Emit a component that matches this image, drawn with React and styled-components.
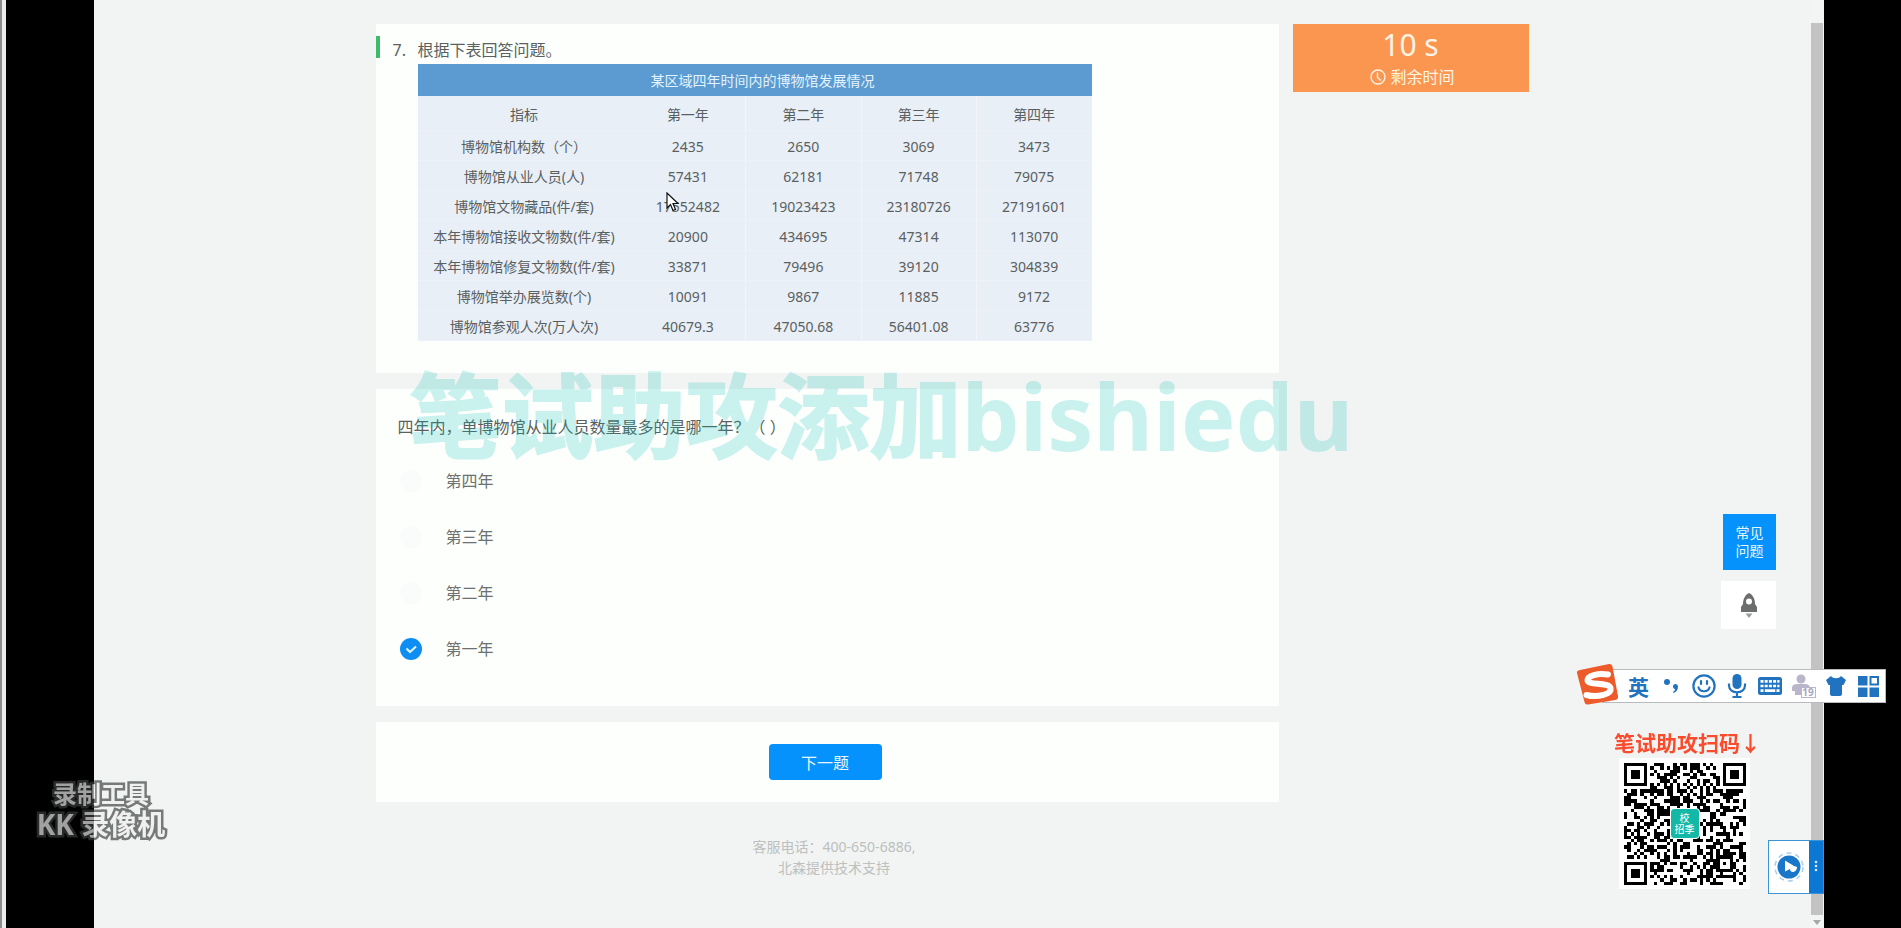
import React, { useState } from "react";
import styled, { createGlobalStyle } from "styled-components";

const GlobalStyle = createGlobalStyle`
  * { box-sizing: border-box; }
  body {
    margin: 0;
    background: #000;
    color: #5a5f5f;
    font-family: "Noto Sans", "Noto Sans CJK SC", sans-serif;
    font-size: 16px;
    line-height: 24px;
  }
  button { font-family: inherit; border: 0; padding: 0; cursor: pointer; }
`;

const Desktop = styled.div`
  position: relative;
  display: flex;
  min-height: 100vh;
  overflow: hidden;
`;

const WindowEdge = styled.div`
  flex: 0 0 6px;
  background: #ececec;
  border-left: 2px solid #8c8c8c;
`;

const BlackBar = styled.div`
  flex: 0 0 ${(p) => p.$width}px;
  background: #000;
`;

const Page = styled.div`
  flex: 1;
  display: flex;
  justify-content: center;
  gap: 14px;
  padding-top: 24px;
  background: #f1f4f3;
`;

const Column = styled.main`
  position: relative;
  flex: 0 1 903px;
  display: flex;
  flex-direction: column;
  gap: 16px;
`;

const Sidebar = styled.aside`
  flex: 0 0 236px;
`;

const Card = styled.section`
  background: #fdfffd;
`;

const MaterialCard = styled(Card)`
  padding: 12px 0 32px;
`;

const MaterialTitle = styled.h1`
  display: flex;
  gap: 10px;
  margin: 0;
  padding-left: 13px;
  border-left: 4px solid #3dbd6b;
  height: 22px;
  font-size: 16px;
  font-weight: 400;
  line-height: 28px;
`;

const Number = styled.span`
  width: 15px;
`;

const DataTable = styled.table`
  width: 674px;
  margin: 6px 0 0 42px;
  border-collapse: collapse;
  table-layout: fixed;
  background: #e9eff7;
  font-size: 14px;
  line-height: 20px;
  text-align: center;

  caption {
    height: 32px;
    padding-left: 16px;
    line-height: 34px;
    background: #5b9bd1;
    color: #e3f3fc;
  }
  th, td {
    height: 30px;
    padding: 4px 0 0;
    font-weight: 400;
    border-bottom: 1px solid #edf2f9;
  }
  thead th { height: 34px; }
  th:first-child { width: 213px; }
  td:nth-child(n + 3), thead th:nth-child(n + 3) { border-left: 1px solid #f2f6fb; }
`;

const QuestionCard = styled(Card)`
  padding: 26px 22px 29px;
`;

const Options = styled.fieldset`
  margin: 0;
  padding: 0;
  border: 0;
`;

const Stem = styled.legend`
  padding: 0;
  margin-bottom: 14px;
`;

const Option = styled.label`
  display: flex;
  align-items: center;
  gap: 24px;
  height: 56px;
  padding-left: 2px;
  color: #6c7171;
  cursor: pointer;
`;

const RadioBox = styled.span`
  display: grid;
  width: 22px;
  height: 22px;

  > * { grid-area: 1 / 1; }
  svg { visibility: hidden; pointer-events: none; }
  input:checked + svg { visibility: visible; }
`;

const Radio = styled.input`
  appearance: none;
  width: 22px;
  height: 22px;
  margin: 0;
  border-radius: 50%;
  background: #fafcfb;
  &:checked { background: #0e8ef2; }
`;

const ActionCard = styled(Card)`
  display: flex;
  justify-content: center;
  padding: 22px 4px 22px 0;
`;

const NextButton = styled.button`
  width: 113px;
  height: 36px;
  border-radius: 4px;
  background: #0592fd;
  color: #e6f7ff;
  font-size: 16px;
`;

const Footer = styled.footer`
  padding: 18px 0 0 14px;
  color: #bcc0bf;
  font-size: 14px;
  line-height: 21px;
  text-align: center;

  p { margin: 0; }
`;

const Timer = styled.div`
  display: flex;
  flex-direction: column;
  align-items: center;
  height: 68px;
  background: #fb9650;
  color: #fff4e6;
`;

const TimeLeft = styled.strong`
  font-size: 30px;
  font-weight: 400;
  line-height: 42px;
`;

const TimeLabel = styled.span`
  display: flex;
  align-items: center;
  gap: 4px;
  padding-left: 4px;
  line-height: 22px;
`;

const Scrollbar = styled.div`
  flex: 0 0 14px;
  display: flex;
  flex-direction: column;
  align-items: center;
  padding: 23px 1px 2px 0;
  background: #f3f5f4;
`;

const Thumb = styled.div`
  flex: 1;
  width: 12px;
  margin-bottom: 3px;
  background: #c2c3c2;
`;

const Watermark = styled.div`
  position: absolute;
  left: 34px;
  top: 346px;
  color: rgb(0, 190, 182);
  font-size: 92px;
  font-weight: 700;
  line-height: 92px;
  white-space: nowrap;
  opacity: 0.2;
  pointer-events: none;
`;

const HeavyText = styled.span`
  -webkit-text-stroke: 2px currentColor;
`;

const SideTools = styled.nav`
  position: fixed;
  right: 125px;
  top: 514px;
  display: flex;
  flex-direction: column;
  align-items: flex-end;
  gap: 11px;
`;

const FaqButton = styled.button`
  width: 53px;
  height: 56px;
  padding: 0 12px;
  background: #0592fd;
  color: #e6f7ff;
  font-size: 14px;
  line-height: 18px;
`;

const RocketButton = styled.button`
  display: grid;
  place-items: center;
  width: 55px;
  height: 48px;
  background: #fff;
`;

const ImeBar = styled.div`
  position: fixed;
  right: 15px;
  top: 669px;
  display: flex;
  align-items: center;
  width: 284px;
  height: 34px;
  padding-left: 19px;
  border: 1px solid #b9bcbf;
  background: #fff;
  color: #2273bf;
`;

const ImeLogo = styled.svg`
  position: absolute;
  left: -27px;
  top: -7px;
`;

const ImeButton = styled.button`
  display: grid;
  place-items: center;
  width: 33px;
  height: 32px;
  background: none;
  color: inherit;
  font-size: 21px;
  font-weight: 700;
`;

const ScanPanel = styled.div`
  position: fixed;
  right: 140px;
  top: 728px;
  display: flex;
  flex-direction: column;
  align-items: center;
`;

const ScanTitle = styled.div`
  height: 30px;
  color: #fb4b2d;
  font-size: 21px;
  font-weight: 700;
  line-height: 30px;
  white-space: nowrap;
`;

const QrFrame = styled.div`
  display: grid;
  place-items: center;
  width: 131px;
  height: 131px;
  margin-right: 6px;
  background: #fff;

  > * { grid-area: 1 / 1; }
`;

const QrBadge = styled.div`
  display: grid;
  place-content: center;
  width: 30px;
  height: 31px;
  border: 1px solid #fff;
  border-radius: 4px;
  background: #14b8a6;
  color: #fff;
  font-size: 10px;
  line-height: 11px;
  text-align: center;
`;

const Recorder = styled.div`
  position: fixed;
  right: 77px;
  top: 840px;
  display: flex;
  width: 56px;
  height: 54px;
  border: 1px solid #3b93d8;
  background: #fff;
`;

const RecordButton = styled.button`
  flex: 1;
  display: grid;
  place-items: center;
  background: #fff;
`;

const MoreButton = styled.button`
  width: 14px;
  background: #0d78d4;
`;

const RecorderMark = styled.div`
  position: fixed;
  left: 34px;
  top: 778px;
  width: 134px;
  color: #ededed;
  font-weight: 700;
  text-align: center;
  white-space: nowrap;
  opacity: 0.68;
  -webkit-text-stroke: 5px #3a3f3d;
  paint-order: stroke fill;
  pointer-events: none;
`;

const MarkLine = styled.div`
  font-size: ${(p) => p.$size}px;
  line-height: 31px;
`;

const Cursor = styled.svg`
  position: absolute;
  left: 290px;
  top: 168px;
`;

const years = ["第一年", "第二年", "第三年", "第四年"];

const rows = [
  ["博物馆机构数（个）", "2435", "2650", "3069", "3473"],
  ["博物馆从业人员(人)", "57431", "62181", "71748", "79075"],
  ["博物馆文物藏品(件/套)", "17552482", "19023423", "23180726", "27191601"],
  ["本年博物馆接收文物数(件/套)", "20900", "434695", "47314", "113070"],
  ["本年博物馆修复文物数(件/套)", "33871", "79496", "39120", "304839"],
  ["博物馆举办展览数(个)", "10091", "9867", "11885", "9172"],
  ["博物馆参观人次(万人次)", "40679.3", "47050.68", "56401.08", "63776"],
];

const options = ["第四年", "第三年", "第二年", "第一年"];

const QR_SIZE = 37;

function ring(x, y, cx, cy) {
  return Math.max(Math.abs(x - cx), Math.abs(y - cy));
}

function buildQrPath() {
  let seed = 20917;
  let d = "";
  for (let y = 0; y < QR_SIZE; y++) {
    for (let x = 0; x < QR_SIZE; x++) {
      seed = (seed * 1103515245 + 12345) % 2147483648;
      let dark = seed / 2147483648 < 0.5;
      if (y === 6 || x === 6) dark = (x + y) % 2 === 0;
      for (const [cx, cy] of [[3, 3], [33, 3], [3, 33]]) {
        const r = ring(x, y, cx, cy);
        if (r <= 4) dark = r !== 4 && r !== 2;
      }
      const a = ring(x, y, 30, 30);
      if (a <= 2) dark = a !== 1;
      if (dark) d += `M${x} ${y}h1v1h-1z`;
    }
  }
  return d;
}

const qrPath = buildQrPath();

function ClockIcon() {
  return (
    <svg width="16" height="16" viewBox="0 0 16 16" fill="none" stroke="currentColor" strokeWidth="1.4" aria-hidden="true">
      <circle cx="8" cy="8" r="7" />
      <path d="M7.5 3.5v5l3.5 3" />
    </svg>
  );
}

function RocketIcon() {
  return (
    <svg width="18" height="25" viewBox="0 0 18 25" aria-hidden="true">
      <path fill="#6b6e6c" fillRule="evenodd" d="M9 0C13 2 15 6 15 11l2 3v5H1v-5l2-3C3 6 5 2 9 0zM9 5.500a3 3 0 1 0 0 6 3 3 0 0 0 0-6z" />
      <path fill="#9a9d9b" d="M5.500 20.500h7L9 25z" />
    </svg>
  );
}

function SmileIcon() {
  return (
    <svg width="24" height="24" viewBox="0 0 24 24" fill="none" stroke="currentColor" strokeWidth="2.200" strokeLinecap="round" aria-hidden="true">
      <circle cx="12" cy="12" r="10.600" />
      <path d="M9 7v3M15 7v3M6.500 13.500c1.500 5 9.500 5 11 0" />
    </svg>
  );
}

function MicIcon() {
  return (
    <svg width="20" height="24" viewBox="0 0 20 24" fill="none" stroke="currentColor" strokeWidth="2.200" aria-hidden="true">
      <rect x="5.500" y="0" width="9" height="15" rx="4.500" fill="currentColor" stroke="none" />
      <path d="M2 9.500v2c0 9 16 9 16 0v-2M10 18v5M5.500 23h9" />
    </svg>
  );
}

function KeyboardIcon() {
  return (
    <svg width="24" height="18" viewBox="0 0 24 18" aria-hidden="true">
      <rect width="24" height="18" rx="2.500" fill="currentColor" />
      <path stroke="#fff" strokeWidth="2.600" strokeDasharray="3 1.200" d="M2.500 4.400h19M2.500 9h19" />
      <path stroke="#fff" strokeWidth="2.600" d="M2.500 13.600h3M6.800 13.600h10.500M18.500 13.600h3" />
    </svg>
  );
}

function PersonIcon() {
  return (
    <svg width="26" height="25" viewBox="0 0 26 25" aria-hidden="true">
      <circle cx="11" cy="5" r="4.500" fill="#b9b6cc" />
      <path fill="#b9b6cc" d="M2 13q1-3 5-3h8q4 0 5 3v3h-5v5H5v-4H2z" />
      <rect x="11.500" y="13.500" width="14" height="10" fill="#fff" stroke="#b9b6cc" />
      <text x="18" y="22" fontSize="10" fontWeight="700" textAnchor="middle" fill="#a9a6bf">19</text>
    </svg>
  );
}

function ShirtIcon() {
  return (
    <svg width="20" height="22" viewBox="0 0 20 22" aria-hidden="true">
      <path fill="currentColor" d="M5 1c2 3 8 3 10 0l5 4-2.500 5H16v9q0 2-2 2H6q-2 0-2-2v-9H2.500L0 5z" />
    </svg>
  );
}

function GridIcon() {
  return (
    <svg width="21" height="21" viewBox="0 0 21 21" fill="currentColor" aria-hidden="true">
      <path d="M0 0h9.500v9.500H0zM0 11.500h9.500V21H0zM11.500 11.500H21V21h-9.500z" />
      <rect x="12.500" y="1" width="7.500" height="7.500" fill="none" stroke="currentColor" strokeWidth="2" />
    </svg>
  );
}

function PunctuationIcon() {
  return (
    <svg width="14" height="16" viewBox="0 0 14 16" fill="currentColor" aria-hidden="true">
      <circle cx="3" cy="4" r="3" />
      <path d="M9 8.500a2.500 2.500 0 0 1 5 0c0 3-1.500 5.500-4.500 6.500l-.5-1c1.500-.8 2-1.800 2-3-1.200 0-2-1.200-2-2.500z" />
    </svg>
  );
}

function App() {
  const [answer, setAnswer] = useState("第一年");

  return (
    <>
      <GlobalStyle />
      <Desktop>
        <WindowEdge />
        <BlackBar $width={88} />
        <Page>
          <Column>
            <MaterialCard>
              <MaterialTitle>
                <Number>7.</Number>
                根据下表回答问题。
              </MaterialTitle>
              <DataTable>
                <caption>某区域四年时间内的博物馆发展情况</caption>
                <thead>
                  <tr>
                    <th scope="col">指标</th>
                    {years.map((year) => (
                      <th key={year} scope="col">{year}</th>
                    ))}
                  </tr>
                </thead>
                <tbody>
                  {rows.map(([label, ...values]) => (
                    <tr key={label}>
                      <th scope="row">{label}</th>
                      {values.map((value) => (
                        <td key={value}>{value}</td>
                      ))}
                    </tr>
                  ))}
                </tbody>
              </DataTable>
            </MaterialCard>

            <QuestionCard>
              <Options>
                <Stem>四年内，单博物馆从业人员数量最多的是哪一年？（ ）</Stem>
                {options.map((option) => (
                  <Option key={option}>
                    <RadioBox>
                      <Radio
                        type="radio"
                        name="answer"
                        value={option}
                        checked={answer === option}
                        onChange={() => setAnswer(option)}
                      />
                      <svg width="22" height="22" viewBox="0 0 22 22" fill="none" stroke="#d9f3ff" strokeWidth="2.200" aria-hidden="true">
                        <path d="M6.500 10.500l3.500 3.500 6-5.500" />
                      </svg>
                    </RadioBox>
                    {option}
                  </Option>
                ))}
              </Options>
            </QuestionCard>

            <ActionCard>
              <NextButton type="button">下一题</NextButton>
            </ActionCard>

            <Footer>
              <p>客服电话：400-650-6886,</p>
              <p>北森提供技术支持</p>
            </Footer>

            <Watermark>
              <HeavyText>笔试助攻添加</HeavyText>bishiedu
            </Watermark>
            <Cursor width="14" height="21" viewBox="0 0 14 21" aria-hidden="true">
              <path fill="#fff" stroke="#111" strokeWidth="1.200" d="M1 1v15l3.500-3.500 2.500 6 2.500-1-2.500-6h5z" />
            </Cursor>
          </Column>

          <Sidebar>
            <Timer>
              <TimeLeft>10 s</TimeLeft>
              <TimeLabel>
                <ClockIcon />
                剩余时间
              </TimeLabel>
            </Timer>
          </Sidebar>
        </Page>
        <Scrollbar>
          <Thumb />
          <svg width="8" height="8" viewBox="0 0 8 8" aria-hidden="true">
            <path fill="#a5a8a6" d="M0 2h8L4 7z" />
          </svg>
        </Scrollbar>
        <BlackBar $width={77} />

        <SideTools>
          <FaqButton type="button">常见问题</FaqButton>
          <RocketButton type="button" aria-label="返回顶部">
            <RocketIcon />
          </RocketButton>
        </SideTools>

        <ScanPanel>
          <ScanTitle>笔试助攻扫码↓</ScanTitle>
          <QrFrame>
            <svg width="122" height="122" viewBox="0 0 37 37" shapeRendering="crispEdges" aria-hidden="true">
              <path d={qrPath} />
            </svg>
            <QrBadge>
              <span>校</span>
              <span>招季</span>
            </QrBadge>
          </QrFrame>
        </ScanPanel>

        <Recorder>
          <RecordButton type="button" aria-label="录制">
            <svg width="32" height="32" viewBox="0 0 32 32" aria-hidden="true">
              <circle cx="16" cy="16" r="14" fill="none" stroke="#a9cfec" strokeWidth="1.500" strokeDasharray="5 4" />
              <circle cx="16" cy="16" r="11.500" fill="#1a76c8" />
              <path fill="#fff" d="M12 9.500v11l5-2.500c0 4 6 4 7-1v-1l-3-1z" />
            </svg>
          </RecordButton>
          <MoreButton type="button" aria-label="更多">
            <svg width="4" height="12" viewBox="0 0 4 12" fill="#d4eafa" aria-hidden="true">
              <circle cx="2" cy="2" r="1.300" />
              <circle cx="2" cy="6" r="1.300" />
              <circle cx="2" cy="10" r="1.300" />
            </svg>
          </MoreButton>
        </Recorder>

        <ImeBar>
          <ImeLogo width="43" height="43" viewBox="0 0 43 43" aria-hidden="true">
            <path fill="#ee5b2b" d="M4 7L33 1q3-.5 3.500 2.500L42 33q.5 3-2.500 4L12 41.500q-3 .5-3.500-2.500L1 10q-.5-2.500 3-3z" />
            <path fill="none" stroke="#fff" strokeWidth="6" strokeLinecap="round" d="M32 11.500C22 9.500 11 13 11.500 17.500c.5 5 21.500 1.500 23 7.500C36 31 22 35 10.500 32" />
          </ImeLogo>
          <ImeButton type="button">英</ImeButton>
          <ImeButton type="button" aria-label="标点"><PunctuationIcon /></ImeButton>
          <ImeButton type="button" aria-label="表情"><SmileIcon /></ImeButton>
          <ImeButton type="button" aria-label="语音"><MicIcon /></ImeButton>
          <ImeButton type="button" aria-label="键盘"><KeyboardIcon /></ImeButton>
          <ImeButton type="button" aria-label="账号"><PersonIcon /></ImeButton>
          <ImeButton type="button" aria-label="皮肤"><ShirtIcon /></ImeButton>
          <ImeButton type="button" aria-label="工具箱"><GridIcon /></ImeButton>
        </ImeBar>

        <RecorderMark>
          <MarkLine $size={24}>录制工具</MarkLine>
          <MarkLine $size={28}>KK 录像机</MarkLine>
        </RecorderMark>
      </Desktop>
    </>
  );
}

export default App;
